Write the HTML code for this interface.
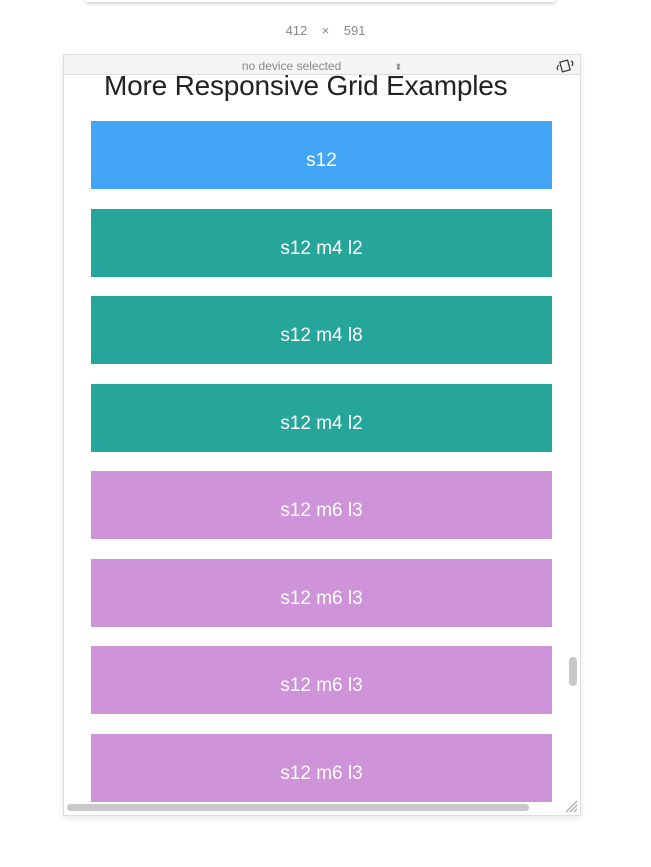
<!DOCTYPE html>
<html><head><style>
body{margin:0;width:651px;height:867px;background:#fff;position:relative;overflow:hidden;font-family:"Liberation Sans",sans-serif}
.top{position:absolute;left:86px;top:-10px;width:469px;height:12px;background:#fff;box-shadow:0 1px 4px rgba(0,0,0,.25)}
.dim{position:absolute;top:23px;left:0;width:651px;text-align:center;color:#888;font-size:13px}
.frame{position:absolute;left:63px;top:54px;width:516px;height:760px;border:1px solid #ddd;box-shadow:0 2px 6px rgba(0,0,0,.1);overflow:hidden;background:#fff}
.bar{position:absolute;left:0;top:0;width:516px;height:19px;background:#f5f5f5;border-bottom:1px solid #ddd;text-align:center;font-size:12px;color:#888;line-height:22px}
h1{position:absolute;left:40px;top:15px;margin:0;font-weight:normal;font-size:28px;color:#222;letter-spacing:-0.2px}
.b{position:absolute;left:27px;width:461px;height:68px;color:#fff;font-size:19px;text-align:center;line-height:79px;font-weight:300}
.blue{background:#42a5f5}.teal{background:#26a69a}.pur{background:#ce93d8}
.vs{position:absolute;left:505px;top:602px;width:8px;height:29px;background:#c8c8c8;border-radius:4px}
.hs{position:absolute;left:3px;top:749px;width:462px;height:7px;background:#c8c8c8;border-radius:4px}
</style></head><body>
<div class="top"></div>
<div class="dim">412 &nbsp;&nbsp; × &nbsp;&nbsp; 591</div>
<div class="frame">
<div class="bar">no device selected <span style="margin-left:50px;font-size:9px">⬍</span></div>
<svg style="position:absolute;left:491px;top:3px" width="20" height="15" viewBox="0 0 20 15"><rect x="6" y="3" width="8" height="10" fill="none" stroke="#333" stroke-width="1.2" transform="rotate(-15 10 8)"/><path d="M3 12 Q1 9 4 7 M16 3 Q19 4 17 8" fill="none" stroke="#333" stroke-width="1.2"/></svg>
<h1>More Responsive Grid Examples</h1>
<div class="b blue" style="top:66px">s12</div>
<div class="b teal" style="top:154px">s12 m4 l2</div>
<div class="b teal" style="top:241px">s12 m4 l8</div>
<div class="b teal" style="top:329px">s12 m4 l2</div>
<div class="b pur" style="top:416px">s12 m6 l3</div>
<div class="b pur" style="top:504px">s12 m6 l3</div>
<div class="b pur" style="top:591px">s12 m6 l3</div>
<div class="b pur" style="top:679px">s12 m6 l3</div>
<div class="vs"></div>
<div class="hs"></div>
<svg style="position:absolute;left:500px;top:744px" width="14" height="14"><path d="M2 13L13 2M6 13L13 6M10 13L13 10" stroke="#999"/></svg>
</div>
</body></html>
